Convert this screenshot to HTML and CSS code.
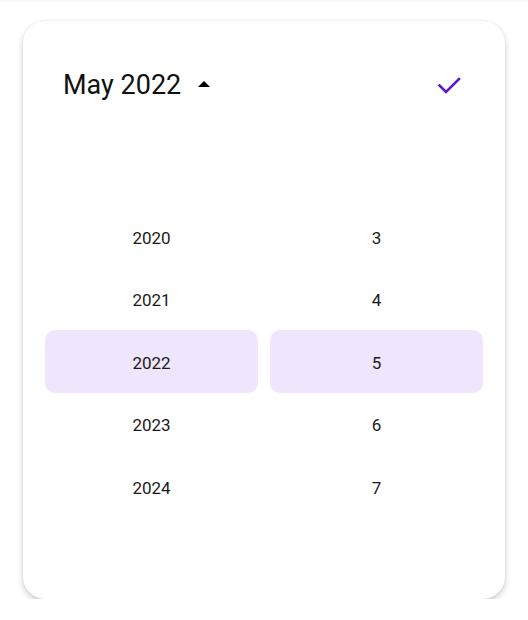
FILE: index.html
```html
<!DOCTYPE html>
<html>
<head>
<meta charset="utf-8">
<link rel="stylesheet" href="styles.css">
</head>
<body>
<div class="topline"></div>
<div class="card">
  <div class="header">
    <div class="title">
      <span class="title-text">May 2022</span>
      <svg class="caret" width="24" height="24" viewBox="0 0 24 24"><path d="M6 15l6-6 6 6z" fill="#000"/></svg>
    </div>
    <svg class="check" width="28" height="28" viewBox="0 0 28 28"><path d="M4.5 15.5l6.5 6.5 13-13" fill="none" stroke="#5e17c9" stroke-width="2.6" stroke-linecap="square"/></svg>
  </div>
  <div class="picker">
    <div class="col">
      <div class="item">2020</div>
      <div class="item">2021</div>
      <div class="item sel">2022</div>
      <div class="item">2023</div>
      <div class="item">2024</div>
    </div>
    <div class="col">
      <div class="item">3</div>
      <div class="item">4</div>
      <div class="item sel">5</div>
      <div class="item">6</div>
      <div class="item">7</div>
    </div>
  </div>
</div>
</body>
</html>
```
FILE: styles.css
```css
html, body {
  margin: 0;
  padding: 0;
  background: #ffffff;
  font-family: Roboto, "Liberation Sans", sans-serif;
  color: #1c1b1f;
}
.topline {
  height: 2px;
  background: #f8f6fb;
}
.card {
  margin: 19px 0 0 23px;
  width: 482px;
  height: 578px;
  background: #fff;
  border-radius: 22px;
  box-shadow: 0 3px 6px rgba(0,0,0,0.2), 0 0 2px rgba(0,0,0,0.08);
  box-sizing: border-box;
  overflow: hidden;
}
.header {
  height: 128px;
  display: flex;
  align-items: center;
  justify-content: space-between;
  padding: 0 42px 0 40px;
}
.title {
  display: flex;
  align-items: center;
  gap: 11px;
}
.title-text {
  font-size: 27px;
  color: #111;
  letter-spacing: 0;
}
.caret {
  display: block;
  margin-top: -2px;
}
.check {
  display: block;
  margin-top: -2px;
}
.picker {
  display: flex;
  gap: 12px;
  padding: 56px 22px 0 22px;
}
.col {
  flex: 1;
  display: flex;
  flex-direction: column;
}
.item {
  height: 62.5px;
  box-sizing: border-box;
  padding-top: 3px;
  display: flex;
  align-items: center;
  justify-content: center;
  font-size: 17px;
  color: #1a1a1a;
  border-radius: 10px;
}
.item.sel {
  background: #efe5fc;
}
```
